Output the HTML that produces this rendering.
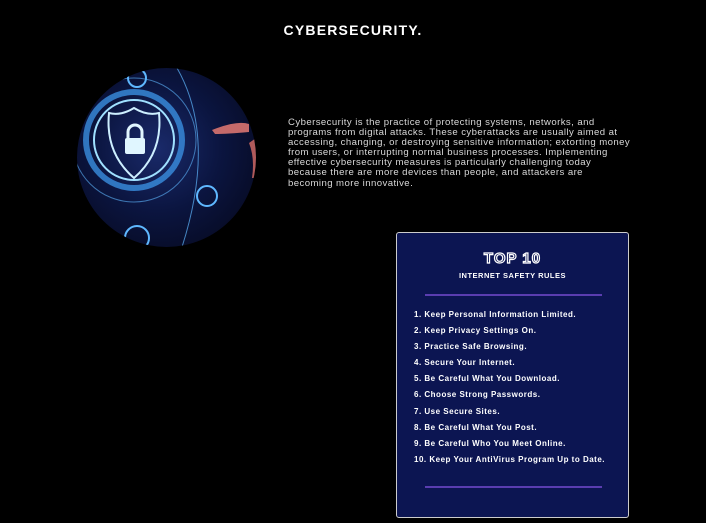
<!DOCTYPE html>
<html><head><style>
body{margin:0;background:#000;width:706px;height:523px;overflow:hidden;position:relative;font-family:"Liberation Sans",sans-serif;color:#fff}
h1{position:absolute;left:0;width:706px;top:22px;margin:0;text-align:center;font-size:14px;letter-spacing:1.2px;font-weight:bold;color:#fff}
.p{position:absolute;left:288px;top:118px;font-size:9.6px;line-height:10.1px;color:#d8d8d8;white-space:nowrap;letter-spacing:.42px}
.circ{position:absolute;left:77px;top:68px;width:179px;height:179px;border-radius:50%;overflow:hidden;background:radial-gradient(circle at 45% 45%,#1a2a6a 0,#0b1540 45%,#070b25 80%)}
.card{position:absolute;left:396px;top:232px;width:233px;height:286px;border:1px solid #ccc;border-radius:3px;background:#0c1552;box-sizing:border-box}
.t{position:absolute;left:0;width:100%;top:17px;text-align:center;font-size:15px;font-weight:bold;color:#0c1552;-webkit-text-stroke:1.2px #fff;letter-spacing:1px}
.s{position:absolute;left:0;width:100%;top:38px;text-align:center;font-size:7.5px;font-weight:bold;letter-spacing:.5px}
.l{position:absolute;left:28px;width:177px;height:2px;background:#5a3db0}
ol{position:absolute;left:17px;top:76px;margin:0;padding:0;list-style:none;font-size:8px;font-weight:bold;letter-spacing:.5px}
li{height:16.1px;line-height:12px}
</style></head><body>
<h1>CYBERSECURITY.</h1>
<div class="circ">
<svg width="179" height="179" viewBox="0 0 179 179">
<g fill="none" stroke="#5fb8ff">
<circle cx="57" cy="72" r="62" stroke-width="1" opacity=".6"/>
<circle cx="57" cy="72" r="48" stroke-width="6" stroke="#3a8fe0" opacity=".8"/>
<circle cx="57" cy="72" r="40" stroke-width="2" stroke="#9fe0ff"/>
<path d="M57 40 Q70 48 82 45 Q86 85 57 110 Q28 85 32 45 Q44 48 57 40Z" stroke="#cdefff" stroke-width="2"/>
<circle cx="60" cy="10" r="9" stroke-width="2"/>
<circle cx="130" cy="128" r="10" stroke-width="2"/>
<circle cx="60" cy="170" r="12" stroke-width="2"/>
<path d="M100 0 Q140 70 105 179" stroke-width="1" opacity=".7"/>
</g>
<rect x="48" y="70" width="20" height="16" rx="2" fill="#e0f6ff"/>
<path d="M51 70 v-6 a7 7 0 0 1 14 0 v6" fill="none" stroke="#e0f6ff" stroke-width="3"/>
<path d="M135 62 Q160 52 172 56 L172 64 Q150 66 138 66Z" fill="#c46a6a"/>
<path d="M172 75 Q178 90 175 110 L179 110 L179 70Z" fill="#b05a5a"/>
</svg></div>
<div class="p">Cybersecurity is the practice of protecting systems, networks, and<br>programs from digital attacks. These cyberattacks are usually aimed at<br>accessing, changing, or destroying sensitive information; extorting money<br>from users, or interrupting normal business processes. Implementing<br>effective cybersecurity measures is particularly challenging today<br>because there are more devices than people, and attackers are<br>becoming more innovative.</div>
<div class="card">
<div class="t">TOP 10</div>
<div class="s">INTERNET SAFETY RULES</div>
<div class="l" style="top:61px"></div>
<ol>
<li>1. Keep Personal Information Limited.</li>
<li>2. Keep Privacy Settings On.</li>
<li>3. Practice Safe Browsing.</li>
<li>4. Secure Your Internet.</li>
<li>5. Be Careful What You Download.</li>
<li>6. Choose Strong Passwords.</li>
<li>7. Use Secure Sites.</li>
<li>8. Be Careful What You Post.</li>
<li>9. Be Careful Who You Meet Online.</li>
<li>10. Keep Your AntiVirus Program Up to Date.</li>
</ol>
<div class="l" style="top:253px"></div>
</div>
</body></html>
